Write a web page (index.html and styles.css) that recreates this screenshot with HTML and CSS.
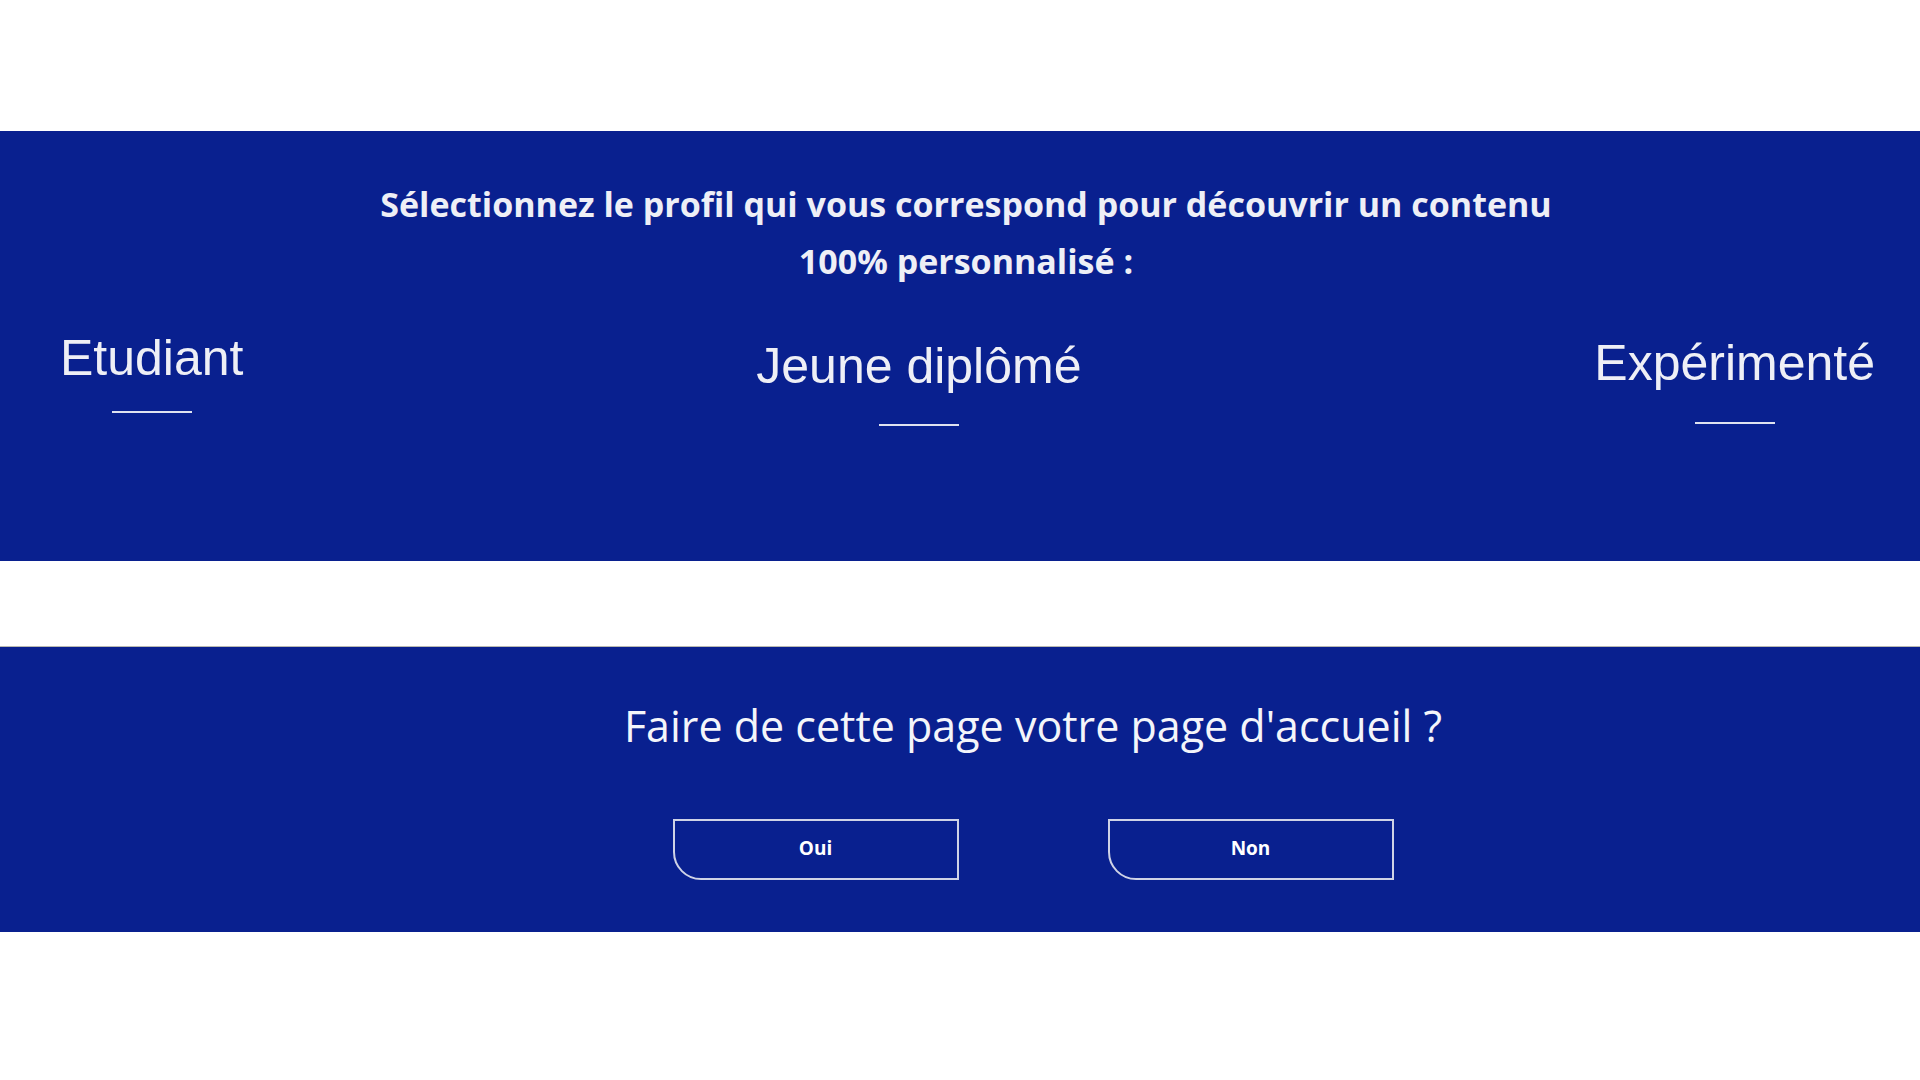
FILE: index.html
```html
<!DOCTYPE html>
<html lang="fr">
<head>
<meta charset="utf-8">
<title>Profil</title>
<link rel="stylesheet" href="styles.css">
</head>
<body>
<section class="profile-band">
  <h2 class="profile-heading">Sélectionnez le profil qui vous correspond pour découvrir un contenu<br>100% personnalisé :</h2>
  <div class="profile-row">
    <div class="profile-item profile-item--a">
      <span class="profile-label">Etudiant</span>
      <span class="profile-line"></span>
    </div>
    <div class="profile-item profile-item--b">
      <span class="profile-label">Jeune diplômé</span>
      <span class="profile-line"></span>
    </div>
    <div class="profile-item profile-item--c">
      <span class="profile-label">Expérimenté</span>
      <span class="profile-line"></span>
    </div>
  </div>
</section>
<section class="home-band">
  <p class="home-title">Faire de cette page votre page d'accueil ?</p>
  <div class="home-buttons">
    <button class="home-btn">Oui</button>
    <button class="home-btn">Non</button>
  </div>
</section>
</body>
</html>
```
FILE: styles.css
```css
html, body {
  margin: 0;
  padding: 0;
  background: #ffffff;
}
body {
  width: 1920px;
  height: 1080px;
  overflow: hidden;
  font-family: "Liberation Sans", Arial, sans-serif;
}
.profile-band {
  margin-top: 131px;
  height: 430px;
  box-sizing: border-box;
  background: #09208f;
  padding-top: 45px;
  color: #eeeff6;
}
.profile-heading {
  margin: 0;
  padding-left: 12px;
  text-align: center;
  font-family: "Open Sans", sans-serif;
  font-weight: 700;
  font-size: 34px;
  line-height: 57px;
  color: #eeeff6;
}
.profile-row {
  display: flex;
  justify-content: space-between;
  align-items: flex-start;
  padding: 0 45px 0 60px;
  margin-top: 40px;
}
.profile-item {
  display: flex;
  flex-direction: column;
  align-items: center;
}
.profile-label {
  font-family: "Liberation Sans", Arial, sans-serif;
  font-size: 50px;
  line-height: 57px;
  color: #eeeff6;
}
.profile-line {
  display: block;
  width: 80px;
  height: 2px;
  background: #dfe2f0;
}
.profile-item--a .profile-line { margin-top: 24px; }
.profile-item--b { padding-top: 8px; }
.profile-item--b .profile-line { margin-top: 29px; }
.profile-item--c { padding-top: 5px; }
.profile-item--c .profile-line { margin-top: 30px; }

.home-band {
  margin-top: 85px;
  height: 286px;
  box-sizing: border-box;
  background: #09208f;
  border-top: 1px solid #b9b9b2;
  padding-left: 146px;
  padding-top: 54px;
  display: flex;
  flex-direction: column;
  align-items: center;
}
.home-title {
  margin: 0;
  font-family: "Open Sans", sans-serif;
  font-size: 43px;
  line-height: 50px;
  color: #f4f5fa;
}
.home-buttons {
  display: flex;
  gap: 149px;
  margin-top: 68px;
}
.home-btn {
  width: 286px;
  height: 61px;
  box-sizing: border-box;
  background: transparent;
  border: 2px solid #cfd3e6;
  border-radius: 0 0 0 28px;
  color: #ffffff;
  font-family: "Open Sans", sans-serif;
  font-weight: 700;
  font-size: 19px;
  padding: 0 0 4px 0;
  cursor: pointer;
}
```
